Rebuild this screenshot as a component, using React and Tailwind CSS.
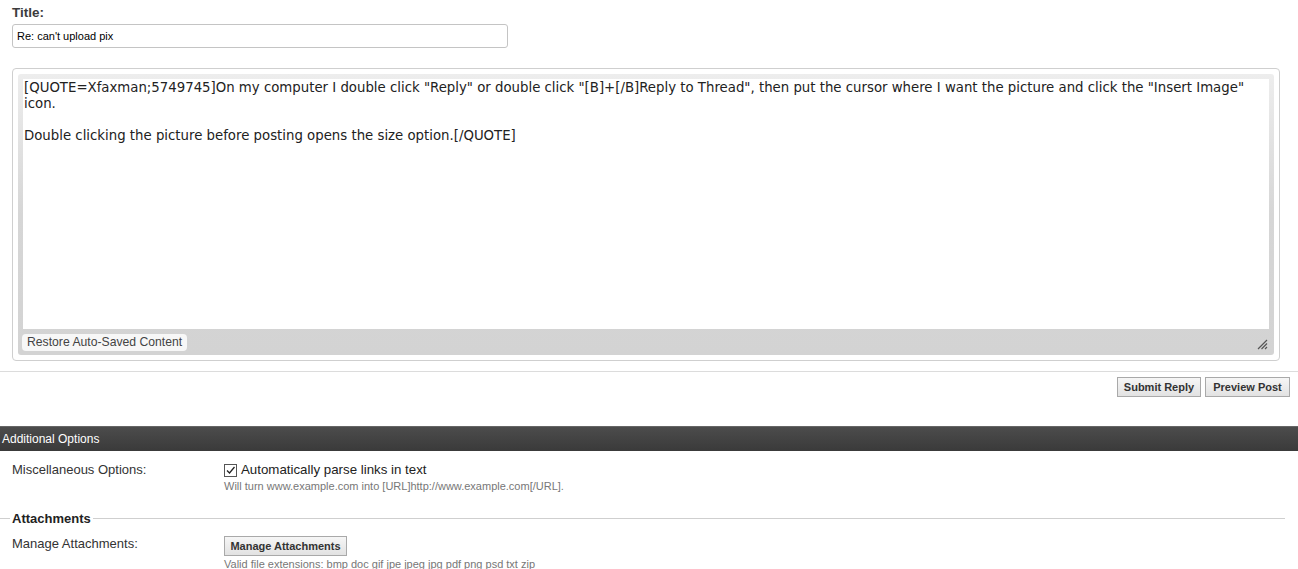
const SANS = "font-['Liberation_Sans',Arial,sans-serif]";

const MiniButton = ({ children, className = "" }) => (
    <button
        type="button"
        className={`h-[20px] px-[5px] border border-[#a9a9a9] bg-gradient-to-b from-[#f6f6f6] to-[#e2e2e2] text-[11px] font-bold text-[#333] leading-none ${className}`}
    >
        {children}
    </button>
);

const OptionRow = ({ label, children }) => (
    <div className="flex pl-[12px]">
        <div className="w-[212px] shrink-0 text-[13px] text-[#333] leading-[16px]">
            {label}
        </div>
        <div className="flex flex-col items-start">{children}</div>
    </div>
);

export default function App() {
    return (
        <div className={`${SANS} w-[1298px] h-[569px] bg-white overflow-hidden text-[#333]`}>
            {/* title */}
            <div className="pt-[5px] pl-[12px]">
                <div className="text-[13.5px] font-bold leading-[15px] text-[#3c3c3c]">Title:</div>
                <div className="mt-[4px] w-[496px] h-[24px] border border-[#c4c4c4] rounded-[3px] flex items-center px-[4px] text-[11px] text-black">
                    Re: can't upload pix
                </div>
            </div>

            {/* editor */}
            <div className="mt-[20px] mx-[12px] w-[1268px] h-[293px] border border-[#cfcfcf] rounded-[4px] p-[5px]">
                <div className="h-full rounded-[3px] bg-gradient-to-b from-[#ededed] via-[#d6d6d6] to-[#d3d3d3] px-[5px] pt-[5px] flex flex-col">
                    <div className="h-[250px] bg-white px-[1px] pt-[1px] font-['DejaVu_Sans',Verdana,sans-serif] text-[13.3px] leading-[16px] text-[#222] whitespace-pre-wrap">
                        {`[QUOTE=Xfaxman;5749745]On my computer I double click "Reply" or double click "[B]+[/B]Reply to Thread", then put the cursor where I want the picture and click the "Insert Image" icon.\n\nDouble clicking the picture before posting opens the size option.[/QUOTE]`}
                    </div>
                    <div className="flex-1 flex items-center justify-between pr-[1px]">
                        <span className="-ml-[1px] h-[17px] px-[5px] bg-[#f7f7f7] rounded-[4px] text-[12.2px] leading-[17px] text-[#444]">
                            Restore Auto-Saved Content
                        </span>
                        <svg width="12" height="12" viewBox="0 0 12 12" className="mt-[4px]">
                            <path d="M11 2 L2 11 M11 5.5 L5.5 11 M11 9 L9 11" stroke="#555" strokeWidth="1.2" fill="none" />
                        </svg>
                    </div>
                </div>
            </div>

            {/* actions */}
            <div className="mt-[10px] border-t border-[#dcdcdc] flex justify-end gap-[4px] pt-[5px] pr-[8px]">
                <MiniButton className="w-[84px]">Submit Reply</MiniButton>
                <MiniButton className="w-[85px]">Preview Post</MiniButton>
            </div>

            {/* additional options */}
            <div className="mt-[29px] h-[25px] bg-gradient-to-b from-[#4c4c4c] to-[#3a3a3a] border-t border-[#666] flex items-center pl-[2px] text-[12px] text-white">
                Additional Options
            </div>

            <div className="mt-[11px]">
                <OptionRow label="Miscellaneous Options:">
                    <label className="flex items-center gap-[4px] text-[13.3px] text-[#222] leading-[16px]">
                        <span className="w-[13px] h-[13px] border border-[#555] bg-white flex items-center justify-center">
                            <svg width="11" height="11" viewBox="0 0 11 11">
                                <path d="M2 5.5 L4.5 8 L9.5 2" stroke="#222" strokeWidth="1.3" fill="none" />
                            </svg>
                        </span>
                        Automatically parse links in text
                    </label>
                    <div className="mt-[2px] text-[11px] text-[#777] leading-[12px]">
                        Will turn www.example.com into [URL]http://www.example.com[/URL].
                    </div>
                </OptionRow>
            </div>

            {/* attachments */}
            <div className="mt-[19px] flex items-center pr-[13px]">
                <div className="w-[10px] border-t border-[#cfcfcf]" />
                <div className="px-[2px] text-[13px] font-bold text-[#222] leading-[15px]">Attachments</div>
                <div className="flex-1 border-t border-[#cfcfcf]" />
            </div>

            <div className="mt-[10px]">
                <OptionRow label="Manage Attachments:">
                    <MiniButton className="h-[18px] w-[123px] px-[3px] text-[11.5px]">Manage Attachments</MiniButton>
                    <div className="mt-[2px] text-[11px] text-[#777] leading-[12px]">
                        Valid file extensions: bmp doc gif jpe jpeg jpg pdf png psd txt zip
                    </div>
                </OptionRow>
            </div>
        </div>
    );
}
